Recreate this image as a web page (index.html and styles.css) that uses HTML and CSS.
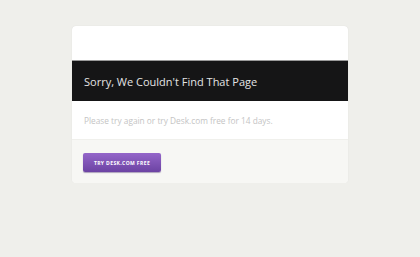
FILE: index.html
```html
<!DOCTYPE html>
<html>
<head>
	<title>Page Not Found</title>
<link rel="stylesheet" href="styles.css">
</head>
<body>
	<div class="card">
		<div class="card-top"></div>
		<div class="banner">
			<h1>Sorry, We Couldn't Find That Page</h1>
		</div>
		<div class="message">
			<p>Please try again or try Desk.com free for 14 days.</p>
		</div>
		<div class="actions">
			<a href="#" class="button">Try Desk.com Free</a>
		</div>
	</div>
</body>
</html>
```

FILE: styles.css
```css
body {
  margin: 0;
  padding-top: 26px;
  background-color: #efefeb;
  font-family: "Open Sans", "DejaVu Sans", sans-serif;
}

.card {
  width: 276px;
  margin: 0 auto;
  background-color: #fff;
  border-radius: 4px;
  box-shadow: 0 0 1px rgba(0, 0, 0, 0.12);
  overflow: hidden;
}

.card-top {
  height: 34px;
  border-bottom: 1px solid #9a9a9a;
}

.banner {
  height: 40px;
  background-color: #151516;
  display: flex;
  align-items: center;
  padding: 0 12px;
}

.banner h1 {
  margin: 0;
  color: #e4e4e4;
  font-size: 11px;
  font-weight: 400;
}

.message {
  height: 38px;
  display: flex;
  align-items: center;
  padding: 0 12px;
  border-bottom: 1px solid #f0f0ec;
}

.message p {
  margin: 0;
  color: #c4c4c4;
  font-size: 8.3px;
}

.actions {
  display: flex;
  background-color: #f7f7f4;
  padding: 13px 11px 11px;
}

.button {
  display: flex;
  align-items: center;
  justify-content: center;
  width: 78px;
  height: 19px;
  border-radius: 2px;
  background: linear-gradient(#9466c9, #6c43a3);
  box-shadow: 0 1px 1px rgba(60, 30, 100, 0.4);
  color: #fff;
  font-size: 5px;
  font-weight: 700;
  letter-spacing: 0.4px;
  text-transform: uppercase;
  text-decoration: none;
}
```
